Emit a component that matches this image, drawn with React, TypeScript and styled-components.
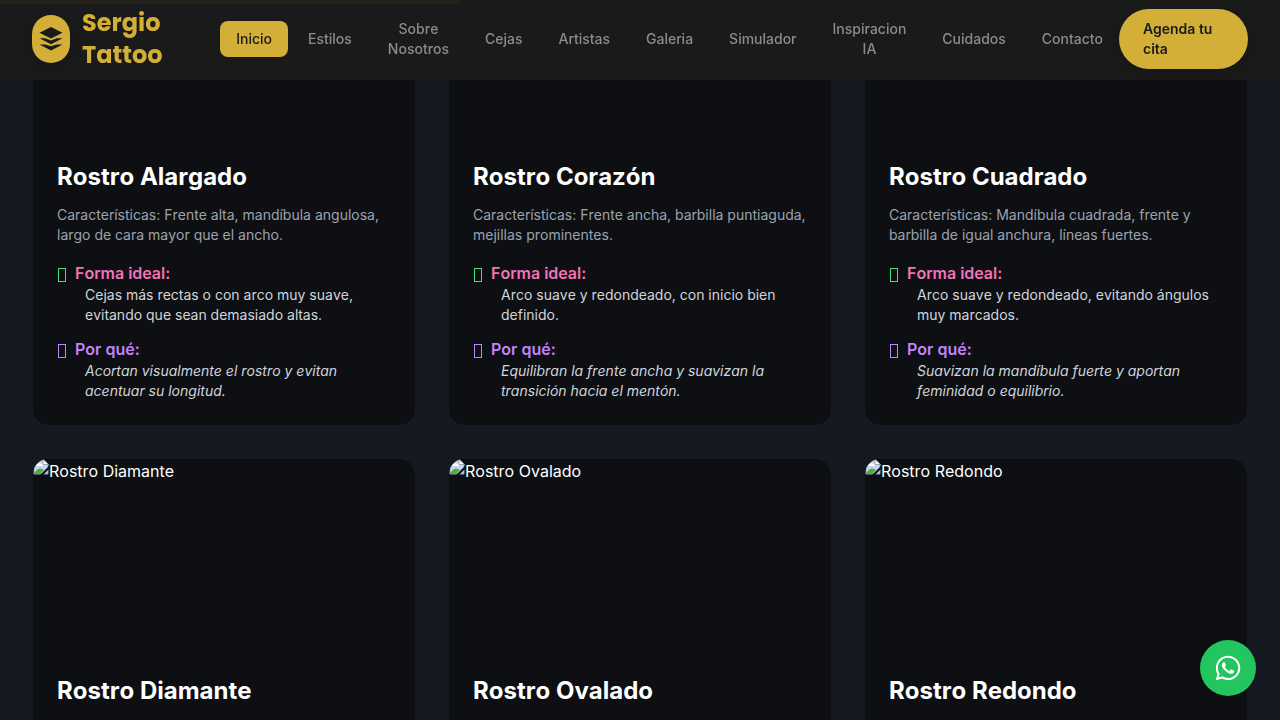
import React from "react";
import styled, { createGlobalStyle, css } from "styled-components";
import { FaWhatsapp } from "react-icons/fa";

const GlobalStyle = createGlobalStyle`
  *, *::before, *::after { box-sizing: border-box; }
  body {
    margin: 0;
    background: #161922;
    color: #ffffff;
    font-family: Inter, "Liberation Sans", sans-serif;
    font-size: 16px;
    line-height: 24px;
    font-kerning: none;
  }
  h2, h3, p { margin: 0; }
`;

const Header = styled.header`
  position: fixed;
  inset: 0 0 auto 0;
  z-index: 10;
  display: flex;
  align-items: center;
  height: 80px;
  padding: 0 32px 2px;
  background: #1a1a1a;
`;

const ScrollProgress = styled.div`
  position: absolute;
  top: 0;
  left: 0;
  width: 36%;
  height: 4px;
  background: #24211a;
`;

const Brand = styled.a`
  flex: 1;
  display: flex;
  align-items: center;
  gap: 12px;
  color: #d4af37;
  font-family: Poppins, Inter, sans-serif;
  font-size: 24px;
  font-weight: 700;
  line-height: 32px;
  text-decoration: none;
`;

const BrandMark = styled.span`
  display: flex;
  align-items: center;
  justify-content: center;
  width: 38px;
  height: 48px;
  border-radius: 19px;
  background: #d4af37;
  box-shadow: 0 4px 12px rgba(0, 0, 0, 0.15);
`;

const BrandName = styled.span`
  width: min-content;
`;

const Nav = styled.nav`
  display: flex;
  align-items: center;
  gap: 4px;
`;

const NavLink = styled.a<{ $active?: boolean }>`
  width: min-content;
  padding: 8px 16px;
  border-radius: 8px;
  color: #8b8b8b;
  font-size: 14px;
  font-weight: 500;
  line-height: 20px;
  text-align: center;
  text-decoration: none;
  ${({ $active }) =>
    $active &&
    css`
      background: #d4af37;
      color: #1a1a1a;
    `}
`;

const BookButton = styled.button`
  flex: 0 0 129px;
  padding: 10px 24px;
  border: 0;
  border-radius: 30px;
  background: #d4af37;
  color: #1a1a1a;
  font-family: inherit;
  font-size: 14px;
  font-weight: 600;
  line-height: 20px;
  text-align: left;
  box-shadow: 0 4px 12px rgba(0, 0, 0, 0.15);
`;

const Main = styled.main`
  height: 100vh;
  overflow: hidden;
`;

const FaceGrid = styled.section`
  display: grid;
  grid-template-columns: repeat(3, 1fr);
  grid-auto-rows: 1fr;
  gap: 32px;
  margin-top: -56px;
  padding: 0 32px;
`;

const Card = styled.article`
  overflow: hidden;
  border: 1px solid #161922;
  border-radius: 16px;
  background: #0d0f13;
  background-clip: padding-box;
`;

const Photo = styled.div`
  display: flex;
  align-items: flex-start;
  height: 192px;
`;

const CardBody = styled.div`
  padding: 24px;
`;

const Title = styled.h2`
  font-size: 24px;
  font-weight: 700;
  line-height: 32px;
`;

const Traits = styled.p`
  margin: 12px 0 16px;
  color: #9ca3af;
  font-size: 14px;
  line-height: 20px;
`;

const Advice = styled.div`
  & + & {
    margin-top: 12px;
  }
`;

const AdviceTitle = styled.h3<{ $color: string }>`
  display: flex;
  gap: 8px;
  color: ${({ $color }) => $color};
  font-size: 16px;
  font-weight: 600;
  line-height: 24px;
`;

const Glyph = styled.span<{ $color: string }>`
  width: 10px;
  padding: 7px 0 3px 1px;

  &::before {
    content: "";
    display: block;
    width: 8px;
    height: 14px;
    border: 1px solid ${({ $color }) => $color};
  }
`;

const AdviceText = styled.p<{ $italic?: boolean }>`
  padding-left: 28px;
  color: #d1d5db;
  font-size: 14px;
  font-style: ${({ $italic }) => ($italic ? "italic" : "normal")};
  line-height: 20px;
`;

const ChatLink = styled.a`
  position: fixed;
  right: 24px;
  bottom: 24px;
  z-index: 10;
  display: flex;
  align-items: center;
  justify-content: center;
  width: 56px;
  height: 56px;
  border-radius: 50%;
  background: #22c55e;
  color: #ffffff;
  box-shadow: 0 8px 16px rgba(0, 0, 0, 0.1);
`;

const LayersIcon = () => (
  <svg width="24" height="24" viewBox="0 0 24 24" fill="#1a1a1a" aria-hidden="true">
    <path d="M12 0 L23.5 5.8 L12 11.6 L0.5 5.8 Z" />
    <path d="M0.5 11.2 H6 L12 13.6 L18 11.2 H23.5 L12 17.2 Z" />
    <path d="M0.5 17.4 H6.5 L12 19.2 L17.5 17.4 H23.5 L12 23.4 Z" />
  </svg>
);

const MissingImageIcon = () => (
  <svg width="16" height="16" viewBox="0 0 16 16" aria-hidden="true">
    <path d="M1 1 H11 L15 5 V15 H1 Z" fill="#c3d6f8" stroke="#a5a5a5" />
    <path d="M10 0.5 V5.5 H15.5 Z" fill="#ffffff" stroke="#a5a5a5" />
    <path d="M3 7 q0 -2 2 -2 q1 -2 3 0 q2 0 2 2 Z" fill="#ffffff" />
    <path d="M1 15 Q3 10 7 9.5 Q9 9.5 11 11 L7 15 Z" fill="#56ab3a" />
    <path d="M7 16 L16 7 V10 L10 16 Z" fill="#0d0f13" />
  </svg>
);

const links = [
  "Inicio",
  "Estilos",
  "Sobre Nosotros",
  "Cejas",
  "Artistas",
  "Galeria",
  "Simulador",
  "Inspiracion IA",
  "Cuidados",
  "Contacto",
];

interface Face {
  name: string;
  imageLabel?: string;
  traits?: string;
  shape?: string;
  reason?: string;
}

const faces: Face[] = [
  {
    name: "Rostro Alargado",
    traits: "Características: Frente alta, mandíbula angulosa, largo de cara mayor que el ancho.",
    shape: "Cejas más rectas o con arco muy suave, evitando que sean demasiado altas.",
    reason: "Acortan visualmente el rostro y evitan acentuar su longitud.",
  },
  {
    name: "Rostro Corazón",
    traits: "Características: Frente ancha, barbilla puntiaguda, mejillas prominentes.",
    shape: "Arco suave y redondeado, con inicio bien definido.",
    reason: "Equilibran la frente ancha y suavizan la transición hacia el mentón.",
  },
  {
    name: "Rostro Cuadrado",
    traits: "Características: Mandíbula cuadrada, frente y barbilla de igual anchura, líneas fuertes.",
    shape: "Arco suave y redondeado, evitando ángulos muy marcados.",
    reason: "Suavizan la mandíbula fuerte y aportan feminidad o equilibrio.",
  },
  { name: "Rostro Diamante", imageLabel: "Rostro Diamante" },
  { name: "Rostro Ovalado", imageLabel: "Rostro Ovalado" },
  { name: "Rostro Redondo", imageLabel: "Rostro Redondo" },
];

const FaceCard = ({ name, imageLabel, traits, shape, reason }: Face) => (
  <Card>
    <Photo>
      {imageLabel && (
        <>
          <MissingImageIcon />
          <span>{imageLabel}</span>
        </>
      )}
    </Photo>
    <CardBody>
      <Title>{name}</Title>
      {traits && <Traits>{traits}</Traits>}
      {shape && (
        <Advice>
          <AdviceTitle $color="#f472b6">
            <Glyph $color="#4ade80" aria-hidden="true" />
            Forma ideal:
          </AdviceTitle>
          <AdviceText>{shape}</AdviceText>
        </Advice>
      )}
      {reason && (
        <Advice>
          <AdviceTitle $color="#c084fc">
            <Glyph $color="#c084fc" aria-hidden="true" />
            Por qué:
          </AdviceTitle>
          <AdviceText $italic>{reason}</AdviceText>
        </Advice>
      )}
    </CardBody>
  </Card>
);

export default function App() {
  return (
    <>
      <GlobalStyle />
      <Header>
        <ScrollProgress />
        <Brand href="#inicio">
          <BrandMark>
            <LayersIcon />
          </BrandMark>
          <BrandName>Sergio Tattoo</BrandName>
        </Brand>
        <Nav>
          {links.map((label, i) => (
            <NavLink key={label} href="#" $active={i === 0}>
              {label}
            </NavLink>
          ))}
        </Nav>
        <BookButton type="button">Agenda tu cita</BookButton>
      </Header>
      <Main>
        <FaceGrid>
          {faces.map((face) => (
            <FaceCard key={face.name} {...face} />
          ))}
        </FaceGrid>
      </Main>
      <ChatLink href="#whatsapp" aria-label="WhatsApp">
        <FaWhatsapp size={28} />
      </ChatLink>
    </>
  );
}
